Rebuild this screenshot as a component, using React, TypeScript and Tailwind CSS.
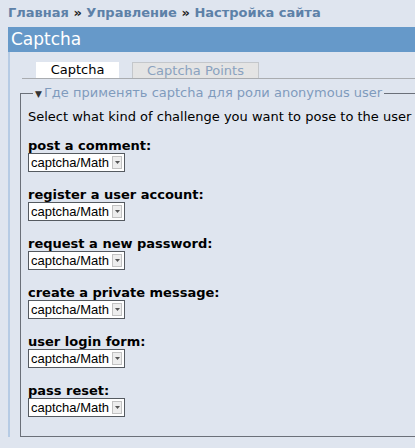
const groups = [
  "post a comment:",
  "register a user account:",
  "request a new password:",
  "create a private message:",
  "user login form:",
  "pass reset:",
];

function FakeSelect() {
  return (
    <div className="flex h-[19px] w-[97px] items-stretch border border-[#555a60] bg-white">
      <span className="flex-1 whitespace-nowrap pl-[2px] font-['Liberation_Sans',sans-serif] text-[13px] leading-[17px] text-black">
        captcha/Math
      </span>
      <span className="my-[2px] mr-[2px] flex w-[10px] shrink-0 items-center justify-center border border-[#c2c2c2] bg-[#ededed]">
        <svg width="5" height="3" viewBox="0 0 5 3">
          <path d="M0 0h5L2.5 3z" fill="#555" />
        </svg>
      </span>
    </div>
  );
}

export default function App() {
  return (
    <div className="h-[448px] w-[415px] overflow-hidden bg-[#dfe5ef] font-['DejaVu_Sans',sans-serif]">
      <div className="whitespace-nowrap pl-2 pt-[5px] text-[13px] font-bold leading-[15px] text-[#5d81a8]">
        Главная <span className="text-[#222]">»</span> Управление{" "}
        <span className="text-[#222]">»</span> Настройка сайта
      </div>

      <div className="ml-2 mt-[7px] w-[700px]">
        <div className="h-[25px] bg-[#6699c9] pl-[3px] text-[17px] leading-[25px] text-white">
          Captcha
        </div>

        <div className="border-l-2 border-[#b6cbe4] pt-[10px] pl-[10px]">
          <div className="ml-[2px] flex items-end gap-[13px] border-b border-[#a9acb0] pl-[14px]">
            <div className="h-[16px] w-[83px] bg-white text-center text-[13px] leading-[16px] text-black">
              Captcha
            </div>
            <div className="h-[16px] w-[127px] border border-b-0 border-[#c4c7cb] bg-[#e4e4e4] text-center text-[13px] leading-[15px] text-[#8aa2bf]">
              Captcha Points
            </div>
          </div>

          <fieldset className="mt-[7px] border border-[#6b7079] pb-[19px] pl-[7px]">
            <legend className="ml-[5px] px-[2px] text-[13px] leading-[14px] text-[#7f9bbd]">
              <span className="mr-[2px] text-[9px] text-[#333]">▼</span>Где
              применять captcha для роли anonymous user
            </legend>
            <div className="mt-[8px] whitespace-nowrap text-[13px] leading-[15px] text-black">
              Select what kind of challenge you want to pose to the user
            </div>
            <div className="mt-[14px] flex flex-col gap-[15px]">
              {groups.map((g) => (
                <div key={g}>
                  <div className="text-[13px] font-bold leading-[15px] text-black">
                    {g}
                  </div>
                  <FakeSelect />
                </div>
              ))}
            </div>
          </fieldset>
        </div>
      </div>
    </div>
  );
}
